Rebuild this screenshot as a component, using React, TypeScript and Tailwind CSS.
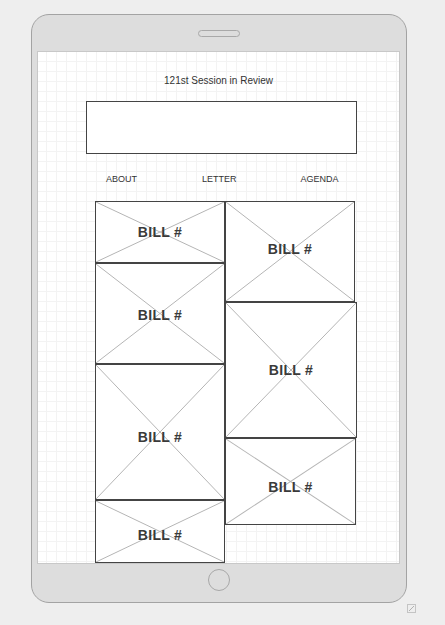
const bills = [
  [
    { h: "h-[62px]", w: "w-[130px]", nudge: "" },
    { h: "h-[101px]", w: "w-[130px]", nudge: "pt-[2px]" },
    { h: "h-[136px]", w: "w-[130px]", nudge: "pt-[10px]" },
    { h: "h-[63px]", w: "w-[130px]", nudge: "pt-[6px]" },
  ],
  [
    { h: "h-[101px]", w: "w-[130px]", nudge: "pb-[6px]" },
    { h: "h-[136px]", w: "w-[132px]", nudge: "" },
    { h: "h-[87px]", w: "w-[131px]", nudge: "pt-[10px]" },
  ],
];

function Cross() {
  return (
    <svg className="absolute inset-0 w-full h-full" viewBox="0 0 100 100" preserveAspectRatio="none">
      <line x1="0" y1="0" x2="100" y2="100" stroke="#b5b5b5" strokeWidth="1" vectorEffect="non-scaling-stroke" />
      <line x1="0" y1="100" x2="100" y2="0" stroke="#b5b5b5" strokeWidth="1" vectorEffect="non-scaling-stroke" />
    </svg>
  );
}

function BillTile({ h, w, nudge }: { h: string; w: string; nudge: string }) {
  return (
    <div className={`relative ${h} ${w} border border-[#444] bg-white flex items-center justify-center ${nudge}`}>
      <Cross />
      <span className="relative text-[14px] font-bold tracking-[0.3px] text-[#3a3a3a] leading-none">BILL #</span>
    </div>
  );
}

export default function App() {
  return (
    <div className="relative w-[445px] h-[625px] bg-[#eeeeee] overflow-hidden font-['Liberation_Sans',Arial,sans-serif]">
      <div className="ml-[31px] mt-[14px] w-[376px] h-[589px] rounded-[18px] border border-[#a3a3a3] bg-[#dddddd] flex flex-col items-center">
        {/* speaker */}
        <div className="mt-[15px] w-[42px] h-[7px] rounded-full border border-[#a8a8a8]" />

        {/* screen */}
        <div className="self-start ml-[5px] mt-[14px] w-[363px] h-[513px] border border-[#c8c8c8] bg-white bg-[linear-gradient(to_right,#f3f3f3_1px,transparent_1px),linear-gradient(to_bottom,#f3f3f3_1px,transparent_1px)] bg-[size:10px_10px] bg-[position:8px_9px] flex flex-col">
          <p className="mt-[23px] text-center text-[10px] leading-[12px] text-[#333]">121st Session in Review</p>

          <div className="mt-[14px] ml-[48px] w-[271px] h-[55px] border border-[#444] bg-white" />

          <div className="mt-[20px] flex text-[9px] leading-[11px] text-[#333]">
            <span className="ml-[68px]">ABOUT</span>
            <span className="ml-[65px]">LETTER</span>
            <span className="ml-[64px]">AGENDA</span>
          </div>

          <div className="mt-[16px] ml-[57px] flex items-start">
            <div className="flex flex-col">
              {bills[0].map((b, i) => (
                <BillTile key={i} {...b} />
              ))}
            </div>
            <div className="flex flex-col">
              {bills[1].map((b, i) => (
                <BillTile key={i} {...b} />
              ))}
            </div>
          </div>
        </div>

        {/* home button */}
        <div className="mt-[5px] w-[22px] h-[22px] rounded-full border border-[#a8a8a8]" />
      </div>

      {/* resize handle */}
      <svg className="absolute left-[407px] top-[604px]" width="9" height="9" viewBox="0 0 9 9">
        <rect x="0.5" y="0.5" width="8" height="8" fill="none" stroke="#c4c4c4" />
        <line x1="2" y1="7" x2="7" y2="2" stroke="#b0b0b0" />
      </svg>
    </div>
  );
}
